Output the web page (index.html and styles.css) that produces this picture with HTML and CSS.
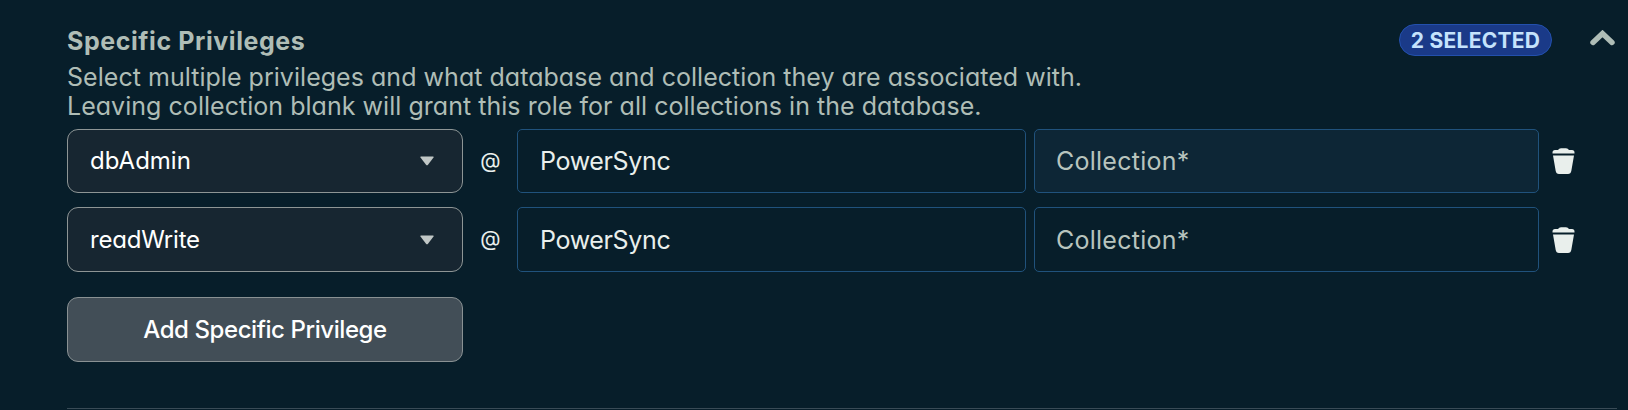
FILE: index.html
```html
<!DOCTYPE html>
<html lang="en">
<head>
<meta charset="utf-8">
<title>Specific Privileges</title>
<link rel="stylesheet" href="styles.css">
</head>
<body>
<section class="panel">
  <header class="header">
    <div class="intro">
      <h2 class="title">Specific Privileges</h2>
      <p class="description">Select multiple privileges and what database and collection they are associated with.<br>Leaving collection blank will grant this role for all collections in the database.</p>
    </div>
    <span class="badge">2 SELECTED</span>
    <svg class="chevron" viewBox="0 0 25 16"><path d="M3 12.5 12.5 3.5 22 12.5" fill="none" stroke="currentColor" stroke-width="5.4" stroke-linecap="round" stroke-linejoin="miter"/></svg>
  </header>
  <div class="row">
    <div class="select"><span class="value admin">dbAdmin</span><svg class="caret" viewBox="0 0 14 10"><path d="M1 .5h12q1 0 .5 1L8 8.7q-1 1-2 0L.5 1.5Q0 .5 1 .5z" fill="currentColor"/></svg></div>
    <span class="at">@</span>
    <div class="input database">PowerSync</div>
    <div class="input collection hovered">Collection*</div>
    <svg class="trash" viewBox="0 0 23 26"><path d="M.5 5.600V4.500Q.5 2 3 2H6Q7 .3 9 .3H14Q16 .3 17 2H20Q22.500 2 22.500 4.500V5.600ZM1 7.600H22L19.300 23Q18.800 26 16 26H7Q4.200 26 3.700 23Z" fill="currentColor"/></svg>
  </div>
  <div class="row second">
    <div class="select"><span class="value write">readWrite</span><svg class="caret" viewBox="0 0 14 10"><path d="M1 .5h12q1 0 .5 1L8 8.7q-1 1-2 0L.5 1.5Q0 .5 1 .5z" fill="currentColor"/></svg></div>
    <span class="at">@</span>
    <div class="input database">PowerSync</div>
    <div class="input collection">Collection*</div>
    <svg class="trash" viewBox="0 0 23 26"><path d="M.5 5.600V4.500Q.5 2 3 2H6Q7 .3 9 .3H14Q16 .3 17 2H20Q22.500 2 22.500 4.500V5.600ZM1 7.600H22L19.300 23Q18.800 26 16 26H7Q4.200 26 3.700 23Z" fill="currentColor"/></svg>
  </div>
  <button class="add" type="button">Add Specific Privilege</button>
  <hr class="divider">
</section>
</body>
</html>
```
FILE: styles.css
```css
* { box-sizing: border-box; }
body {
  margin: 0;
  height: 410px;
  overflow: hidden;
  background: #071e2a;
  color: #e9efec;
  font-family: Inter, "Open Sans", sans-serif;
  font-feature-settings: "cv11", "ss03";
  font-size: 25px;
  font-weight: 370;
}
.panel { padding: 24px 11px 0 67px; }
.header { display: flex; align-items: flex-start; height: 105px; color: #afbdb6; }
.intro { flex: 1; white-space: nowrap; }
.title { margin: 0; font-size: 25px; line-height: 34px; font-weight: 700; letter-spacing: .57px; }
.description { margin: 5px 0 0; line-height: 29px; letter-spacing: .035px; }
.badge {
  display: flex;
  align-items: center;
  justify-content: center;
  width: 153px;
  height: 32px;
  border: 1px solid #2350ad;
  border-radius: 16px;
  background: #1a3a88;
  color: #c5e3fc;
  font-size: 21px;
  font-weight: 700;
  letter-spacing: .25px;
  white-space: nowrap;
}
.chevron { width: 25px; height: 16px; margin: 6px 2px 0 38px; }
.row { display: flex; align-items: center; height: 64px; }
.second { height: 65px; margin-top: 14px; }
.select {
  display: flex;
  align-items: center;
  justify-content: space-between;
  width: 396px;
  height: 100%;
  padding: 0 28px 0 22px;
  border: 1px solid #8d9595;
  border-radius: 11px;
  background: #172631;
  color: #fff;
  font-size: 24px;
}
.value { padding-bottom: 1px; }
.write { letter-spacing: -.2px; }
.caret { width: 14px; height: 10px; color: #c1c7c6; }
.at { width: 54px; padding: 0 0 2px 1px; text-align: center; font-size: 21px; }
.input {
  display: flex;
  align-items: center;
  height: 100%;
  padding: 0 22px;
  border: 1px solid #20527c;
  border-radius: 5px;
}
.database { width: 509px; margin-right: 8px; letter-spacing: -.35px; }
.collection { width: 505px; padding-left: 21px; color: #b8c4be; letter-spacing: .25px; }
.hovered { background: #0d2636; }
.trash { width: 23px; height: 26px; margin-left: 13px; color: #e9efec; }
.add {
  display: block;
  width: 396px;
  height: 65px;
  margin-top: 25px;
  padding: 0 0 1px;
  border: 1px solid #899193;
  border-radius: 11px;
  background: #424e57;
  color: #fff;
  font: inherit;
  font-feature-settings: inherit;
  font-size: 24px;
  font-weight: 500;
  letter-spacing: -.42px;
}
.divider { height: 1px; margin: 46px 0 0; border: 0; background: #394b56; }
```
